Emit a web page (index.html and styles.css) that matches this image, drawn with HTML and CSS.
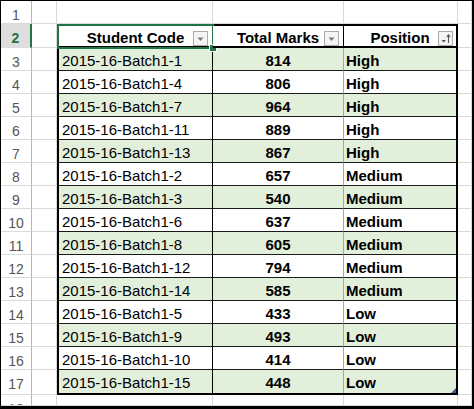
FILE: index.html
```html
<!DOCTYPE html>
<html>
<head>
<meta charset="utf-8">
<link rel="stylesheet" href="styles.css">
</head>
<body>
<div class="frame">
  <div class="sheet">
    <div class="rh">1</div><div class="c"></div><div class="c"></div><div class="c"></div><div class="c"></div><div class="c e"></div>

    <div class="rh sel">2</div><div class="c"></div><div class="c e"></div>
    <div class="rh">3</div><div class="c"></div><div class="c e"></div>
    <div class="rh">4</div><div class="c"></div><div class="c e"></div>
    <div class="rh">5</div><div class="c"></div><div class="c e"></div>
    <div class="rh">6</div><div class="c"></div><div class="c e"></div>
    <div class="rh">7</div><div class="c"></div><div class="c e"></div>
    <div class="rh">8</div><div class="c"></div><div class="c e"></div>
    <div class="rh">9</div><div class="c"></div><div class="c e"></div>
    <div class="rh">10</div><div class="c"></div><div class="c e"></div>
    <div class="rh">11</div><div class="c"></div><div class="c e"></div>
    <div class="rh">12</div><div class="c"></div><div class="c e"></div>
    <div class="rh">13</div><div class="c"></div><div class="c e"></div>
    <div class="rh">14</div><div class="c"></div><div class="c e"></div>
    <div class="rh">15</div><div class="c"></div><div class="c e"></div>
    <div class="rh">16</div><div class="c"></div><div class="c e"></div>
    <div class="rh">17</div><div class="c"></div><div class="c e"></div>

    <div class="rh">18</div><div class="c"></div><div class="c"></div><div class="c"></div><div class="c"></div><div class="c e"></div>

    <div class="tbl">
      <div class="th code">Student Code
        <span class="dd"><svg width="13" height="13" viewBox="0 0 13 13"><path d="M3.5 5.5h6l-3 3.5z" fill="#7a7a7a"/></svg></span>
        <span class="selbox"><span class="handle"></span></span>
      </div>
      <div class="th marks">Total Marks
        <span class="dd"><svg width="13" height="13" viewBox="0 0 13 13"><path d="M3.5 5.5h6l-3 3.5z" fill="#7a7a7a"/></svg></span>
      </div>
      <div class="th pos">Position
        <span class="dd"><svg width="13" height="13" viewBox="0 0 13 13"><path d="M2.5 8h4.5l-2.25 2.5z" fill="#555"/><path d="M9.5 11V3M7.8 4.8L9.5 2.8l1.7 2" stroke="#555" stroke-width="1.1" fill="none"/></svg></span>
      </div>

      <div class="td code g">2015-16-Batch1-1</div><div class="td marks g">814</div><div class="td pos g">High</div>
      <div class="td code">2015-16-Batch1-4</div><div class="td marks">806</div><div class="td pos">High</div>
      <div class="td code g">2015-16-Batch1-7</div><div class="td marks g">964</div><div class="td pos g">High</div>
      <div class="td code">2015-16-Batch1-11</div><div class="td marks">889</div><div class="td pos">High</div>
      <div class="td code g">2015-16-Batch1-13</div><div class="td marks g">867</div><div class="td pos g">High</div>
      <div class="td code">2015-16-Batch1-2</div><div class="td marks">657</div><div class="td pos">Medium</div>
      <div class="td code g">2015-16-Batch1-3</div><div class="td marks g">540</div><div class="td pos g">Medium</div>
      <div class="td code">2015-16-Batch1-6</div><div class="td marks">637</div><div class="td pos">Medium</div>
      <div class="td code g">2015-16-Batch1-8</div><div class="td marks g">605</div><div class="td pos g">Medium</div>
      <div class="td code">2015-16-Batch1-12</div><div class="td marks">794</div><div class="td pos">Medium</div>
      <div class="td code g">2015-16-Batch1-14</div><div class="td marks g">585</div><div class="td pos g">Medium</div>
      <div class="td code">2015-16-Batch1-5</div><div class="td marks">433</div><div class="td pos">Low</div>
      <div class="td code g">2015-16-Batch1-9</div><div class="td marks g">493</div><div class="td pos g">Low</div>
      <div class="td code">2015-16-Batch1-10</div><div class="td marks">414</div><div class="td pos">Low</div>
      <div class="td code g last">2015-16-Batch1-15</div><div class="td marks g last">448</div><div class="td pos g last">Low<span class="corner"></span></div>
    </div>
  </div>
</div>
</body>
</html>
```

FILE: styles.css
```css
* { box-sizing: border-box; }
html, body { margin: 0; padding: 0; background: #fff; }

.frame {
  width: 474px;
  height: 409px;
  border-style: solid;
  border-color: #000;
  border-width: 1px 2px 3px 1px;
  overflow: hidden;
  background: #fff;
}

.sheet {
  display: grid;
  grid-template-columns: 31px 25px 156px 131px 114px 1fr;
  grid-template-rows: 23px 24px repeat(14, 23px) 25px 1fr;
  height: 100%;
  font-family: "Liberation Sans", Arial, sans-serif;
}

.c {
  border-right: 1px solid #d9d9d9;
  border-bottom: 1px solid #d9d9d9;
}

.rh {
  border-right: 1px solid #b6b6b6;
  border-bottom: 1px solid #dadada;
  text-align: center;
  font-size: 14px;
  color: #555;
  padding-top: 6px;
  line-height: 16px;
  overflow: hidden;
}
.rh.sel {
  background: #dedede;
  color: #217346;
  font-weight: bold;
  border-right: 2px solid #217346;
}

.tbl {
  grid-column: 3 / 6;
  grid-row: 2 / 18;
  border: 2px solid #000;
  display: grid;
  grid-template-columns: 154px 131px 1fr;
  grid-template-rows: 22px repeat(15, 23px);
  font-size: 15px;
  color: #000;
}

.th {
  position: relative;
  border-bottom: 2px solid #000;
  border-right: 1px solid #000;
  font-weight: bold;
  text-align: center;
  padding-top: 4px;
  line-height: 16px;
  background: #fff;
}
.th.pos { border-right: none; }

.dd {
  position: absolute;
  top: 5px;
  right: 4px;
  width: 15px;
  height: 15px;
  border: 1px solid #ababab;
  background: #f4f4f4;
  display: flex;
  align-items: center;
  justify-content: center;
}
.th.pos .dd { right: 3px; }

.selbox {
  position: absolute;
  top: -2px;
  left: -2px;
  right: -2px;
  bottom: -3px;
  border: 2px solid #217346;
}
.handle {
  position: absolute;
  right: -4px;
  bottom: -4px;
  width: 6px;
  height: 6px;
  background: #217346;
  outline: 1px solid #fff;
}

.td {
  border-bottom: 1px solid #1a1a1a;
  padding-top: 4px;
  line-height: 18px;
  white-space: nowrap;
  background: #fff;
}
.td.g { background: #e2efda; }
.td.last { border-bottom: none; }

.td.code {
  padding-left: 3px;
  border-right: 1px solid #000;
}
.td.marks {
  text-align: center;
  font-weight: bold;
  border-right: 1px solid #8cbf68;
}
.td.pos {
  position: relative;
  padding-left: 2px;
  font-weight: bold;
}

.corner {
  position: absolute;
  right: 0;
  bottom: 0;
  width: 0;
  height: 0;
  border-style: solid;
  border-width: 0 0 5px 5px;
  border-color: transparent transparent #3c5a9a transparent;
}
```
